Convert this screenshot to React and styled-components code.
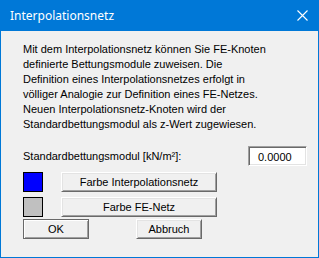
import React from "react";
import styled, { createGlobalStyle } from "styled-components";

const Global = createGlobalStyle`
  html, body { margin: 0; padding: 0; background: #f0f0f0; }
  #root { width: 319px; height: 258px; }
`;

const Window = styled.div`
  box-sizing: border-box;
  width: 319px;
  height: 258px;
  border: 1px solid #0078d7;
  border-top: none;
  background: #f0f0f0;
  display: flex;
  flex-direction: column;
  font-family: "Liberation Sans", Arial, sans-serif;
  font-size: 11px;
  color: #000;
`;

const TitleBar = styled.div`
  height: 31px;
  margin: 0 -1px;
  background: #0078d7;
  display: flex;
  align-items: center;
  justify-content: space-between;
  padding: 0 11px 0 10px;
  color: #fff;
  font-family: "Noto Sans", "Open Sans", sans-serif;
  font-size: 12px;
  flex-shrink: 0;
`;

const Title = styled.span`
  margin-top: -1px;
`;

const Close = styled.svg`
  width: 11px;
  height: 11px;
`;

const Body = styled.div`
  display: flex;
  flex-direction: column;
  padding: 11px 11px 0 22px;
`;

const Para = styled.p`
  margin: 0;
  line-height: 15px;
`;

const FieldRow = styled.div`
  display: flex;
  align-items: center;
  justify-content: space-between;
  margin-top: 14px;
  height: 20px;
`;

const Input = styled.div`
  box-sizing: border-box;
  width: 59px;
  height: 20px;
  background: #fff;
  border-top: 1px solid #a0a0a0;
  border-left: 1px solid #a0a0a0;
  border-right: 1px solid #fff;
  border-bottom: 1px solid #fff;
  box-shadow: inset 1px 1px 0 #696969, inset -1px -1px 0 #e3e3e3;
  display: flex;
  align-items: center;
  padding-left: 9px;
  padding-top: 1px;
`;

const ColorRow = styled.div`
  display: flex;
  align-items: center;
  gap: 18px;
  margin-top: ${(p) => p.$mt}px;
  height: 20px;
`;

const Swatch = styled.div`
  box-sizing: border-box;
  width: 20px;
  height: 20px;
  border: 1px solid #000;
  background: ${(p) => p.$color};
`;

const Button = styled.button`
  box-sizing: border-box;
  width: ${(p) => p.$w}px;
  height: 20px;
  padding: 0;
  margin: 0;
  background: #f0f0f0;
  font-family: "Liberation Sans", Arial, sans-serif;
  font-size: 11px;
  color: #000;
  border-style: solid;
  border-width: 1px;
  border-color: ${(p) => (p.$default ? "#696969" : "#fff #696969 #696969 #fff")};
  box-shadow: ${(p) =>
    p.$default
      ? "inset 1px 1px 0 #fff, inset -1px -1px 0 #a0a0a0"
      : "inset 1px 1px 0 #e3e3e3, inset -1px -1px 0 #a0a0a0"};
  display: flex;
  align-items: center;
  justify-content: center;
`;

const ActionRow = styled.div`
  display: flex;
  align-items: center;
  gap: 47px;
  margin-top: 2px;
  height: 20px;
`;

export default function App() {
  return (
    <>
      <Global />
      <Window>
        <TitleBar>
          <Title>Interpolationsnetz</Title>
          <Close viewBox="0 0 11 11">
            <path d="M0.5 0.5 L10.5 10.5 M10.5 0.5 L0.5 10.5" stroke="#fff" strokeWidth="1.1" fill="none" />
          </Close>
        </TitleBar>
        <Body>
          <Para>
            Mit dem Interpolationsnetz können Sie FE-Knoten
            <br />
            definierte Bettungsmodule zuweisen. Die
            <br />
            Definition eines Interpolationsnetzes erfolgt in
            <br />
            völliger Analogie zur Definition eines FE-Netzes.
            <br />
            Neuen Interpolationsnetz-Knoten wird der
            <br />
            Standardbettungsmodul als z-Wert zugewiesen.
          </Para>
          <FieldRow>
            <span>Standardbettungsmodul [kN/m²]:</span>
            <Input>0.0000</Input>
          </FieldRow>
          <ColorRow $mt={6}>
            <Swatch $color="#0000ff" />
            <Button $w={156}>Farbe Interpolationsnetz</Button>
          </ColorRow>
          <ColorRow $mt={5}>
            <Swatch $color="#c0c0c0" />
            <Button $w={156}>Farbe FE-Netz</Button>
          </ColorRow>
          <ActionRow>
            <Button $w={66} $default>OK</Button>
            <Button $w={66}>Abbruch</Button>
          </ActionRow>
        </Body>
      </Window>
    </>
  );
}
